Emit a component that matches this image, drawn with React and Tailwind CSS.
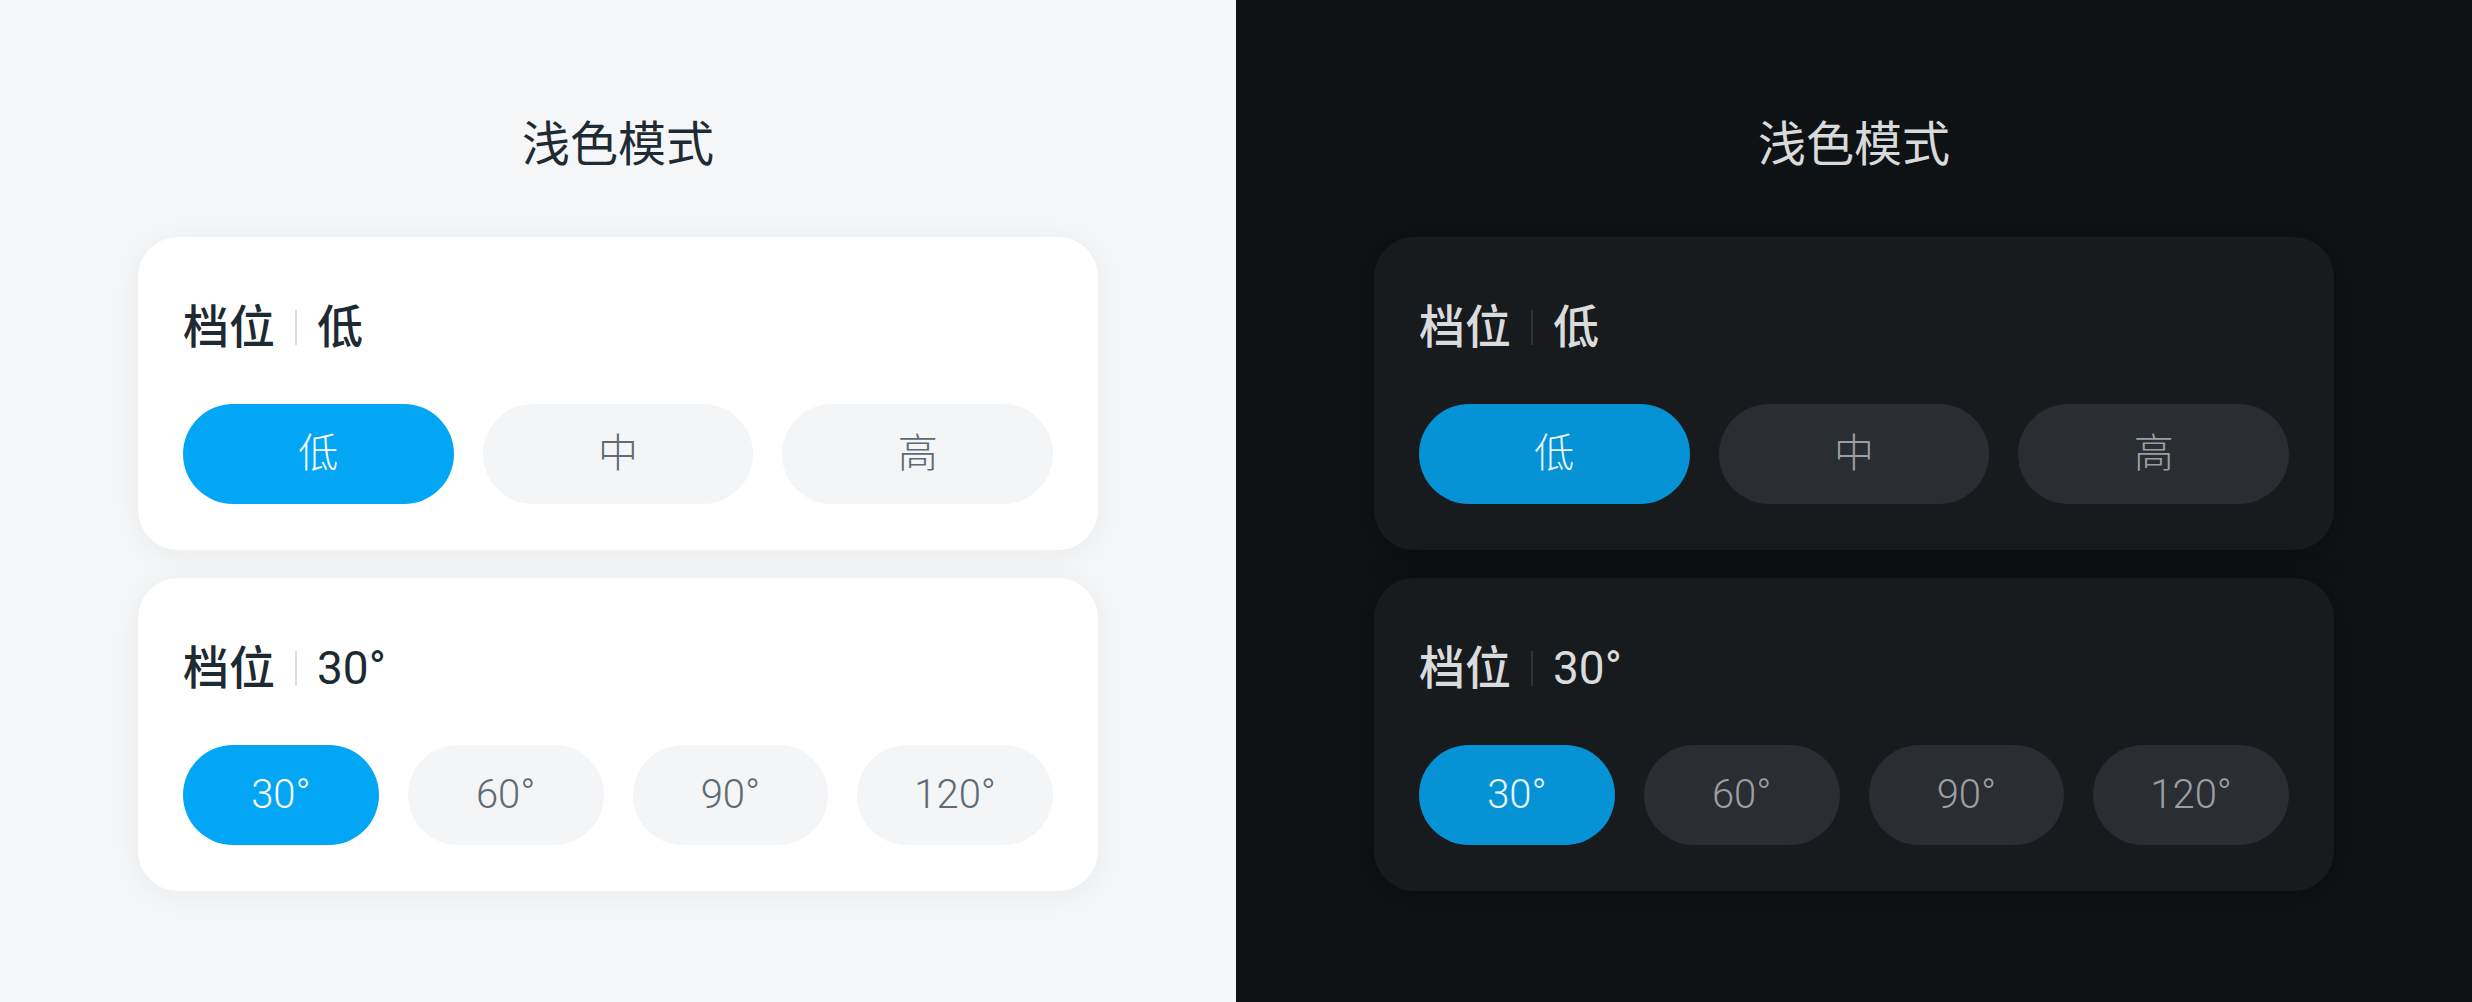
import React from 'react';

const themes = {
  light: {
    page: 'bg-[#f5f6f8]',
    heading: 'text-[#1f2b33]',
    card: 'bg-white shadow-[0_4px_30px_rgba(20,30,40,0.05)]',
    title: 'text-[#1e2a32]',
    divider: 'bg-[#dcdee0]',
    active: 'bg-[#03a6f4] text-white',
    idle: 'bg-[#f4f5f7] text-[#5f6a72]',
  },
  dark: {
    page: 'bg-[#0f1215]',
    heading: 'text-[#d8d9da]',
    card: 'bg-[#181b1e] shadow-[0_4px_30px_rgba(0,0,0,0.35)]',
    title: 'text-[#dadbdc]',
    divider: 'bg-[#303438]',
    active: 'bg-[#0693d6] text-[#eaf5fb]',
    idle: 'bg-[#2a2d31] text-[#9c9fa2]',
  },
};

const fontStack = { fontFamily: 'Roboto, "Noto Sans CJK SC", sans-serif' };

const GearCard = ({ theme, value, options, active, latin }) => {
  const t = themes[theme];
  return (
    <div className={`w-[960px] h-[313px] rounded-[40px] px-[45px] pt-[62px] ${t.card}`}>
      {/* Title row */}
      <div className={`flex items-center h-[56px] text-[46px] leading-[56px] ${t.title}`}>
        <span className="font-medium">档位</span>
        <span className={`w-[2px] h-[35px] mx-[20px] ${t.divider}`} />
        <span className={latin ? 'font-normal' : 'font-medium'}>{value}</span>
      </div>

      {/* Options */}
      <div className="flex gap-[29px] mt-[49px]">
        {options.map((opt) => (
          <button
            key={opt}
            className={`flex-1 h-[100px] rounded-full flex items-center justify-center text-[40px] font-light ${
              opt === active ? t.active : t.idle
            }`}
          >
            {opt}
          </button>
        ))}
      </div>
    </div>
  );
};

const Panel = ({ theme }) => {
  const t = themes[theme];
  return (
    <div className={`w-1/2 h-[1002px] flex flex-col items-center pt-[117px] ${t.page}`}>
      <h2 className={`text-[48px] leading-[56px] font-normal ${t.heading}`}>浅色模式</h2>
      <div className="flex flex-col gap-[28px] mt-[64px]">
        <GearCard theme={theme} value="低" options={['低', '中', '高']} active="低" />
        <GearCard
          theme={theme}
          value="30°"
          latin
          options={['30°', '60°', '90°', '120°']}
          active="30°"
        />
      </div>
    </div>
  );
};

export default function App() {
  return (
    <div className="flex w-[2472px] h-[1002px]" style={fontStack}>
      <Panel theme="light" />
      <Panel theme="dark" />
    </div>
  );
}
